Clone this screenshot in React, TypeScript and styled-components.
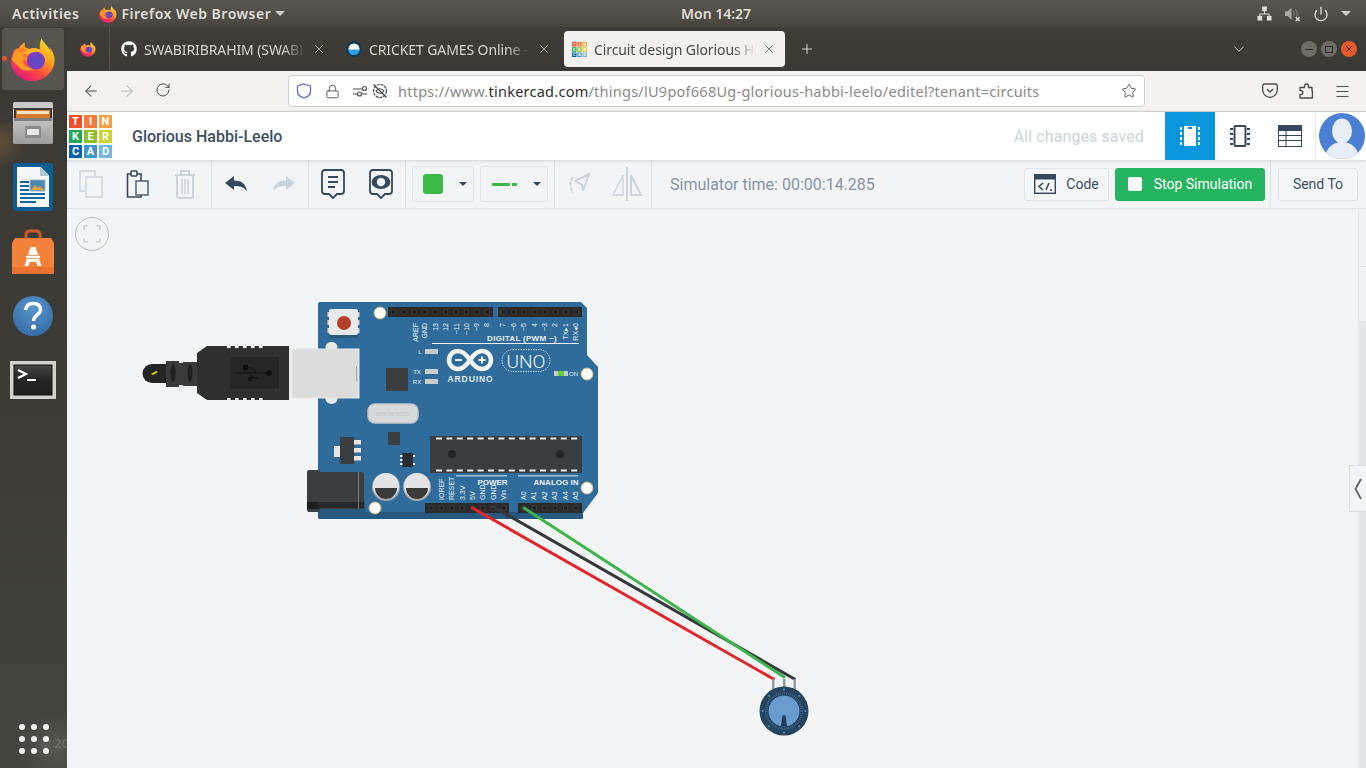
import React, { FunctionComponent } from 'react'
import styled, { createGlobalStyle } from 'styled-components'
import { X, Plus, ChevronDown, ArrowLeft, ArrowRight, RotateCw, Lock, Star, Menu, Power } from 'lucide-react'
import { FaGithub } from 'react-icons/fa'

const GlobalStyle = createGlobalStyle`
  html, body {
    margin: 0;
    height: 100%;
    overflow: hidden;
    background: #3c3b36;
  }
  * {
    box-sizing: border-box;
  }
`

const Screen = styled.div`
  width: 1366px;
  height: 768px;
  display: flex;
  flex-direction: column;
  overflow: hidden;
  font-family: 'Noto Sans', sans-serif;
`

/* ---------- gnome top bar ---------- */

const TopBar = styled.header`
  height: 27px;
  flex: none;
  display: grid;
  grid-template-columns: 681px auto 1fr;
  align-items: center;
  background: linear-gradient(#5a574f, #47453e);
  color: #dfded7;
  font-size: 14px;
  font-weight: 600;
`

const TopLeft = styled.div`
  display: flex;
  align-items: center;
  padding-left: 12px;
  letter-spacing: 0.5px;
`

const AppMenu = styled.div`
  display: flex;
  align-items: center;
  margin-left: 20px;
  gap: 4px;
`

const Caret = styled.span<{ $color?: string; $size?: number }>`
  display: inline-block;
  width: 0;
  height: 0;
  border-left: ${({ $size = 4 }) => $size}px solid transparent;
  border-right: ${({ $size = 4 }) => $size}px solid transparent;
  border-top: ${({ $size = 4 }) => $size}px solid ${({ $color = '#cfcec8' }) => $color};
`

const StatusArea = styled.div`
  display: flex;
  align-items: center;
  justify-content: flex-end;
  gap: 12px;
  padding-right: 15px;
`

/* ---------- main split ---------- */

const Body = styled.div`
  flex: 1;
  display: flex;
  min-height: 0;
`

const Dock = styled.nav`
  width: 67px;
  flex: none;
  position: relative;
  display: flex;
  flex-direction: column;
  overflow: hidden;
  background:
    radial-gradient(circle at 0 116px, rgba(150, 105, 60, 0.45), transparent 26px),
    radial-gradient(circle at 55px 720px, rgba(120, 125, 115, 0.35), transparent 34px),
    linear-gradient(#3a3934, #3c3b36 50%, #45453f);
`

const DockItem = styled.div<{ $active?: boolean }>`
  height: 64.2px;
  flex: none;
  margin: 0 3px 0 2px;
  position: relative;
  display: flex;
  align-items: center;
  justify-content: center;
  border-radius: 4px;
  border-top: 1px solid transparent;
  border-bottom: 1px solid transparent;
  background-clip: padding-box;
  background-color: ${({ $active }) => ($active ? '#565550' : 'transparent')};
`

const RunningDot = styled.span`
  position: absolute;
  left: 0;
  top: 28px;
  width: 5px;
  height: 5px;
  border-radius: 50%;
  background: #e95420;
`

const AppGrid = styled.div`
  margin-top: auto;
  margin-bottom: 14px;
  align-self: center;
  display: grid;
  grid-template-columns: repeat(3, 6px);
  gap: 6px;
`

const AppDot = styled.span`
  width: 6px;
  height: 6px;
  border-radius: 50%;
  background: #f1f1ee;
`

const WallpaperMark = styled.span`
  position: absolute;
  left: 40px;
  bottom: 16px;
  color: rgba(255, 255, 255, 0.16);
  font-size: 13px;
  font-weight: 600;
  white-space: nowrap;
`

const Browser = styled.main`
  flex: 1;
  min-width: 0;
  display: flex;
  flex-direction: column;
`

/* ---------- firefox tab strip ---------- */

const TabStrip = styled.div`
  height: 44px;
  flex: none;
  display: flex;
  align-items: center;
  background: linear-gradient(#3f3d38, #3a3934);
`

const PinnedTab = styled.div`
  width: 43px;
  height: 44px;
  flex: none;
  display: flex;
  align-items: center;
  justify-content: center;
  border-right: 1px solid #57554f;
`

const Tab = styled.div<{ $active?: boolean }>`
  width: 221px;
  height: 36px;
  flex: none;
  margin-left: 4px;
  padding: 0 9px 0 ${({ $active }) => ($active ? 8 : 7)}px;
  display: flex;
  align-items: center;
  gap: 7px;
  border-radius: 4px;
  background: ${({ $active }) => ($active ? '#f3f1ef' : 'transparent')};
  color: ${({ $active }) => ($active ? '#4b4a47' : '#d5d4cf')};
`

const TabLabel = styled.span`
  flex: 1;
  min-width: 0;
  overflow: hidden;
  white-space: nowrap;
  font-size: 14px;
  letter-spacing: -0.1px;
  -webkit-mask-image: linear-gradient(to right, #000 calc(100% - 22px), transparent);
  mask-image: linear-gradient(to right, #000 calc(100% - 22px), transparent);
`

const NewTab = styled.div`
  margin-left: 14px;
  display: flex;
  color: #e2e1dc;
`

const StripRight = styled.div`
  margin-left: auto;
  display: flex;
  align-items: center;
  padding-right: 9px;
`

const StripChevron = styled.div`
  display: flex;
  margin-right: 53px;
  color: #dcdbd6;
`

const WindowButtons = styled.div`
  display: flex;
  gap: 4px;
`

const WindowButton = styled.span<{ $close?: boolean }>`
  width: 16px;
  height: 16px;
  display: flex;
  align-items: center;
  justify-content: center;
  border-radius: 50%;
  background: ${({ $close }) => ($close ? '#e2592a' : '#6d6c66')};
  color: ${({ $close }) => ($close ? '#3a2016' : '#2f2e2a')};
`

const Dash = styled.span`
  width: 8px;
  height: 1px;
  background: #2f2e2a;
`

const Square = styled.span`
  width: 8px;
  height: 7px;
  border: 1px solid #2f2e2a;
`

/* ---------- firefox nav bar ---------- */

const NavBar = styled.div`
  height: 40px;
  flex: none;
  display: flex;
  align-items: center;
  background: #f3f2f0;
  color: #4a4a48;
`

const NavButton = styled.span<{ $muted?: boolean }>`
  width: 36px;
  flex: none;
  display: flex;
  justify-content: center;
  color: ${({ $muted }) => ($muted ? '#b9b8b6' : '#4a4a48')};
`

const NavBack = styled.div`
  display: flex;
  margin-left: 6px;
`

const UrlBox = styled.div`
  width: 857px;
  height: 32px;
  margin-left: 107px;
  padding: 0 7px 0 7px;
  display: flex;
  align-items: center;
  background: #fff;
  border: 1px solid #cfcfcd;
  border-radius: 4px;
`

const UrlIcon = styled.span<{ $width: number }>`
  width: ${({ $width }) => $width}px;
  flex: none;
  display: flex;
  justify-content: center;
`

const UrlText = styled.span`
  flex: 1;
  margin-left: 6px;
  white-space: nowrap;
  overflow: hidden;
  font-size: 14.5px;
  letter-spacing: 0.25px;
  color: #8a8a88;
`

const UrlHost = styled.span`
  color: #2e2e2c;
`

const NavRight = styled.div`
  margin-left: auto;
  display: flex;
  padding-right: 6px;
`

/* ---------- tinkercad header ---------- */

const Header = styled.div`
  height: 49px;
  flex: none;
  position: relative;
  z-index: 1;
  display: flex;
  align-items: center;
  background: #fff;
  border-top: 1px solid #cfcfcd;
  box-shadow: 0 1px 3px rgba(40, 50, 60, 0.16);
  font-family: Roboto, sans-serif;
`

const Logo = styled.div`
  margin-left: 2px;
  display: grid;
  grid-template-columns: repeat(3, 13px);
  grid-auto-rows: 13px;
  gap: 2px;
`

const LogoCell = styled.span<{ $bg: string }>`
  display: flex;
  align-items: center;
  justify-content: center;
  background: ${({ $bg }) => $bg};
  color: #fff;
  font-size: 11px;
  font-weight: 700;
`

const Title = styled.h1`
  margin: 0 0 0 20px;
  font-size: 16px;
  font-weight: 500;
  color: #3d4f63;
`

const Saved = styled.span`
  margin-left: auto;
  margin-right: 21px;
  font-size: 16px;
  letter-spacing: 0.1px;
  color: #ccd3db;
`

const ViewTab = styled.div<{ $active?: boolean }>`
  width: 50px;
  height: 48px;
  flex: none;
  display: flex;
  align-items: center;
  justify-content: center;
  background: ${({ $active }) => ($active ? '#0a96dc' : 'transparent')};
`

const AvatarSlot = styled.div`
  width: 51px;
  height: 48px;
  flex: none;
  display: flex;
  align-items: center;
  justify-content: center;
  padding-left: 1px;
  border-left: 1px solid #e5e7ea;
`

/* ---------- tinkercad toolbar ---------- */

const Toolbar = styled.div`
  height: 49px;
  flex: none;
  display: flex;
  align-items: stretch;
  background: #f3f4f6;
  border-bottom: 1px solid #dfe2e6;
  font-family: Roboto, sans-serif;
`

const ToolGroup = styled.div<{ $width: number; $padLeft?: number; $padRight?: number; $gap?: number }>`
  width: ${({ $width }) => $width}px;
  flex: none;
  padding: 0 ${({ $padRight = 0 }) => $padRight}px 0 ${({ $padLeft = 0 }) => $padLeft}px;
  display: flex;
  align-items: center;
  gap: ${({ $gap = 0 }) => $gap}px;
  border-right: 1px solid #dfe2e6;
`

const ToolSlot = styled.span`
  flex: 1 0 0;
  display: flex;
  justify-content: center;
`

const PickerBox = styled.div<{ $width: number }>`
  width: ${({ $width }) => $width}px;
  height: 36px;
  flex: none;
  padding: 0 6px 0 10px;
  display: flex;
  align-items: center;
  justify-content: space-between;
  border: 1px solid #e2e5e9;
  border-radius: 3px;
`

const Swatch = styled.span`
  width: 20px;
  height: 20px;
  border-radius: 3px;
  background: #3dba45;
`

const LinePreview = styled.span`
  display: flex;
  gap: 2px;
  align-items: center;
  margin-left: 1px;
`

const LineLong = styled.span`
  width: 18px;
  height: 3px;
  background: #3dba45;
`

const LineShort = styled.span`
  width: 5px;
  height: 3px;
  background: #3dba45;
`

const SimTime = styled.span`
  margin-left: 18px;
  align-self: center;
  font-size: 16px;
  color: #8793a2;
`

const ToolActions = styled.div`
  margin-left: auto;
  display: flex;
  align-items: center;
  gap: 6px;
  padding-right: 5px;
  border-right: 1px solid #dfe2e6;
`

const ActionButton = styled.button<{ $primary?: boolean; $width: number }>`
  width: ${({ $width }) => $width}px;
  height: 33px;
  padding: 0;
  display: flex;
  align-items: center;
  justify-content: center;
  gap: ${({ $primary }) => ($primary ? 12 : 10)}px;
  font-family: Roboto, sans-serif;
  font-size: 14px;
  border-radius: 3px;
  border: 1px solid ${({ $primary }) => ($primary ? '#25b45f' : '#e0e3e7')};
  background: ${({ $primary }) => ($primary ? '#25b45f' : '#f5f6f7')};
  color: ${({ $primary }) => ($primary ? '#fff' : '#3d4f63')};
`

const SendWrap = styled.div`
  padding: 0 8px 0 7px;
  display: flex;
  align-items: center;
`

const StopSquare = styled.span`
  width: 14px;
  height: 14px;
  border-radius: 2px;
  background: #fff;
`

/* ---------- canvas ---------- */

const Workspace = styled.div`
  flex: 1;
  min-height: 0;
  display: flex;
  position: relative;
  background: #f3f4f6;
`

const CanvasArea = styled.div`
  flex: 1;
  position: relative;
`

const CircuitSvg = styled.svg`
  position: absolute;
  inset: 0;
  display: block;
`

const FitButton = styled.div`
  position: absolute;
  left: 8px;
  top: 8px;
  width: 34px;
  height: 34px;
  display: flex;
  align-items: center;
  justify-content: center;
  border: 1px solid #bdbdbd;
  border-radius: 50%;
`

const SideStrip = styled.div`
  width: 8px;
  flex: none;
  display: flex;
  flex-direction: column;
  background: #e4e6ea;
`

const SideCap = styled.div<{ $height: number }>`
  height: ${({ $height }) => $height}px;
  background: #f1f2f4;
  border-left: 1px solid #e6e8eb;
  border-bottom: 1px solid #e0e2e6;
`

const CollapseHandle = styled.div`
  position: absolute;
  right: 0;
  top: 256px;
  width: 17px;
  height: 47px;
  display: flex;
  align-items: center;
  justify-content: center;
  background: #f3f4f6;
  border: 1px solid #dcdee1;
  border-right: 0;
`

const BoardText = styled.text<{ $size?: number; $weight?: number }>`
  font-family: 'Liberation Sans', sans-serif;
  font-size: ${({ $size = 7 }) => $size}px;
  font-weight: ${({ $weight = 400 }) => $weight};
  fill: #e9eff4;
`

const UnoText = styled.text`
  font-family: Roboto, sans-serif;
  font-size: 19px;
  font-weight: 300;
  fill: #eef3f7;
`

const CrystalText = styled.text`
  font-family: 'Liberation Sans', sans-serif;
  font-size: 6px;
  fill: #c6c7c8;
`

const FaviconLetter = styled.text`
  font-family: 'Liberation Sans', sans-serif;
  font-size: 3.6px;
  font-weight: 700;
  fill: #fff;
`

/* ---------- drawings ---------- */

const FirefoxLogo: FunctionComponent<{ size: number; id: string }> = ({ size, id }) => (
  <svg width={size} height={size} viewBox="0 0 48 48">
    <defs>
      <linearGradient id={`${id}a`} x1="0.8" y1="0.02" x2="0.2" y2="0.95">
        <stop offset="0" stopColor="#ffe226" />
        <stop offset="0.35" stopColor="#ffa020" />
        <stop offset="0.68" stopColor="#ff4a3e" />
        <stop offset="1" stopColor="#e31587" />
      </linearGradient>
      <radialGradient id={`${id}b`} cx="0.55" cy="0.55" r="0.55">
        <stop offset="0" stopColor="#5a4fc6" />
        <stop offset="0.75" stopColor="#7240c4" />
        <stop offset="1" stopColor="#9a3cb8" />
      </radialGradient>
    </defs>
    <path
      fill={`url(#${id}a)`}
      d="M46 21c-.8-3.600-3-7.400-5-9.600 1 2.200 1.600 4.200 1.800 5.700-2.400-6-6.400-8.400-9.700-13.600-.2-.3-.3-.6-.5-1-1 4.800-2.400 8-1 11.600C27 12 23 12 20 13.500c-1.700-1-2.200-1.200-4-1.500-.6-1.600-.9-3.300-.4-5.300-3.300 1.500-5.400 3.800-6.800 6.500-1.600-.2-3 .2-4 1.300C2.800 18 1 21.700 1 25.500 1 37.500 11 47 23.300 47 36 47 46.500 37 46.500 25c0-1.400-.1-2.700-.5-4z"
    />
    <path
      fill="#ff9b25"
      d="M2.500 23c1-5 3.500-8 6.500-10 0 2 1 3.500 3 5 2-2.300 5.500-2.700 8-1.500-4.500.5-6.500 3-6.500 5.500 3 0 4 1 4.500 2.500-2 1-3.500.5-4.500 1 .5 5 6 9 13 8.500-8 4.500-15.500 1.500-19-3.500-3-2.300-5.500-4.500-5.500-7.500z"
    />
    <circle cx="27" cy="25.500" r="9.500" fill={`url(#${id}b)`} />
    <path fill="#ffb52e" d="M15 18c3-4.500 9.500-6 14.500-4 3.500 1.500 5.800 4.500 6.500 8-2-3.500-5-5.500-8.500-5.500-4 0-6.500 1-7.500 2.500-2 .2-3.500 0-5-1z" />
  </svg>
)

const CabinetIcon = () => (
  <svg width="44" height="46" viewBox="0 0 44 46">
    <defs>
      <linearGradient id="cabBody" x1="0" y1="0" x2="0" y2="1">
        <stop offset="0" stopColor="#d4d4d4" />
        <stop offset="1" stopColor="#9c9c9c" />
      </linearGradient>
    </defs>
    <path fill="#c9c9c9" d="M2 4q0-2 2-2h36q2 0 2 2v4H2z" />
    <rect x="2" y="8" width="40" height="36" rx="1.500" fill="url(#cabBody)" />
    <rect x="3" y="8" width="38" height="13" fill="#3c3a36" />
    <rect x="5" y="10" width="34" height="8" fill="#d9782f" />
    <rect x="6" y="11" width="32" height="3" fill="#f4e2c4" />
    <rect x="3" y="18" width="38" height="3" fill="#7e7e7e" />
    <rect x="14" y="26" width="16" height="12" rx="1" fill="#8a8a8a" />
    <rect x="16" y="29" width="12" height="6" rx="1" fill="#e8e8e8" />
  </svg>
)

const WriterIcon = () => (
  <svg width="42" height="48" viewBox="0 0 42 48">
    <path fill="#0b5d92" d="M3 0h34q4 0 4 4v40q0 4-4 4H5q-4 0-4-4V2q0-2 2-2z" />
    <path fill="#f4f6f8" d="M5 4h24l8 8v32H5z" />
    <path fill="#0b5d92" d="M29 0h8q4 0 4 4v8h-4l-8-8z" />
    <path fill="#b5c4cf" d="M28 4l9 9h-9z" />
    <rect x="8" y="18" width="9" height="2" fill="#14659c" />
    <rect x="8" y="22" width="9" height="2" fill="#14659c" />
    <rect x="8" y="26" width="9" height="2" fill="#14659c" />
    <rect x="8" y="30" width="25" height="2" fill="#14659c" />
    <rect x="8" y="34" width="25" height="2" fill="#14659c" />
    <rect x="8" y="38" width="16" height="2" fill="#14659c" />
    <rect x="18" y="17" width="15" height="11" fill="#4d87b0" stroke="#9eb6c6" />
    <path fill="#e0a33a" d="M19 27l4-5 3 3 2-2 4 4z" />
  </svg>
)

const BagIcon = () => (
  <svg width="44" height="46" viewBox="0 0 44 46">
    <path fill="none" stroke="#c95a28" strokeWidth="3" d="M15 14V6q0-4 4-4h6q4 0 4 4v8" />
    <path fill="#f08339" d="M4 9h36l3 5v31H1V14z" />
    <path fill="#e7682c" d="M1 38h42v7H1z" opacity="0.6" />
    <path fill="#fff" d="M19.500 18h5l6 19h-4l-1.200-4h-6.600L17.500 37h-4z" />
    <rect x="12" y="26" width="20" height="4" fill="#f08339" />
    <rect x="15" y="26.800" width="14" height="2.400" fill="#fff" />
  </svg>
)

const HelpIcon = () => (
  <svg width="42" height="42" viewBox="0 0 42 42">
    <defs>
      <radialGradient id="helpBlue" cx="0.5" cy="0.3" r="0.8">
        <stop offset="0" stopColor="#5b97cf" />
        <stop offset="1" stopColor="#2d679f" />
      </radialGradient>
    </defs>
    <circle cx="21" cy="21" r="20" fill="url(#helpBlue)" />
    <path fill="none" stroke="#fff" strokeWidth="3.400" d="M13.500 15q1-6.500 7.500-6.500 7.500 0 7.500 6.200c0 5-7 5.300-7 11.300" />
    <circle cx="21.500" cy="32" r="2.500" fill="#fff" />
  </svg>
)

const TerminalIcon = () => (
  <svg width="46" height="38" viewBox="0 0 46 38">
    <defs>
      <linearGradient id="termScreen" x1="0" y1="0" x2="0" y2="1">
        <stop offset="0" stopColor="#454545" />
        <stop offset="0.5" stopColor="#262626" />
        <stop offset="1" stopColor="#1e1e1e" />
      </linearGradient>
    </defs>
    <rect width="46" height="38" fill="#d2d2d0" />
    <rect x="4" y="4" width="38" height="30" fill="url(#termScreen)" stroke="#111" />
    <path fill="none" stroke="#fff" strokeWidth="2.200" d="M8 9l8 4-8 4" />
    <rect x="17" y="18" width="9" height="2" fill="#fff" />
  </svg>
)

const NetworkIcon = () => (
  <svg width="15" height="15" viewBox="0 0 16 16" fill="#dfded7">
    <rect x="5.500" y="0.500" width="5" height="5" />
    <rect x="0.500" y="10.500" width="5" height="5" />
    <rect x="10.500" y="10.500" width="5" height="5" />
    <path d="M7.500 5h1v3h5v3h-1V9h-9v2h-1V8h5z" />
  </svg>
)

const MutedIcon = () => (
  <svg width="17" height="16" viewBox="0 0 18 16">
    <path fill="#a9a8a1" d="M1 5h3l4-4v13l-4-4H1z" />
    <path fill="none" stroke="#77766f" strokeWidth="1.300" d="M10 5q2 2.500 0 5M12 3q3.500 4 1 9" />
    <path stroke="#dfded7" strokeWidth="1.600" d="M12.500 11.500l4 4m0-4l-4 4" />
  </svg>
)

const PocketIcon = () => (
  <svg width="16" height="15" viewBox="0 0 16 15" fill="none" stroke="#4a4a48" strokeWidth="1.300">
    <path d="M2.500 1h11q1.800 0 1.800 1.800V7a7.300 7.300 0 0 1-14.600 0V2.800Q.7 1 2.500 1z" />
    <path d="M5 6l3 3 3-3" />
  </svg>
)

const ExtensionIcon = () => (
  <svg width="15" height="16" viewBox="0 0 15 16" fill="none" stroke="#4a4a48" strokeWidth="1.300">
    <path d="M1 15v-3.500h.8a2 2 0 0 0 0-4H1V4.500h4.500V3a2 2 0 0 1 4 0v1.500H13V8h.4v7z" strokeLinejoin="round" />
  </svg>
)

const ShieldIcon = () => (
  <svg width="16" height="16" viewBox="0 0 16 16" fill="none" stroke="#5b6bd8" strokeWidth="1.300">
    <path d="M8 1l6.500 2v5c0 3.500-3 6-6.500 7-3.500-1-6.500-3.500-6.500-7V3z" />
  </svg>
)

const PermissionsIcon = () => (
  <svg width="16" height="12" viewBox="0 0 16 12" fill="none" stroke="#4a4a48" strokeWidth="1.100">
    <path d="M1 4h9M1 9h4M10 9h5" />
    <circle cx="12.500" cy="3.500" r="2" />
    <circle cx="7.500" cy="9" r="2" />
  </svg>
)

const NoTrackIcon = () => (
  <svg width="16" height="16" viewBox="0 0 16 16" fill="none" stroke="#4a4a48" strokeWidth="1.200">
    <circle cx="8" cy="8" r="6.500" strokeDasharray="3 0.800" />
    <path d="M1.500 1.500l13 13" />
    <path d="M4 8c2-3 6-3 8 0-2 3-6 3-8 0z" />
  </svg>
)

const logoCells: [string, string][] = [
  ['T', '#ef4f2b'],
  ['I', '#f57a3c'],
  ['N', '#f4a247'],
  ['K', '#1fa854'],
  ['E', '#8cbf26'],
  ['R', '#cbd233'],
  ['C', '#0a62ad'],
  ['A', '#3f96cf'],
  ['D', '#6fb8e1'],
]

const TinkercadFavicon = () => (
  <svg width="15" height="15" viewBox="0 0 15 15">
    {logoCells.map(([letter, bg], i) => {
      const x = (i % 3) * 5.25
      const y = Math.floor(i / 3) * 5.25
      return (
        <g key={letter}>
          <rect x={x} y={y} width="4.500" height="4.500" fill={bg} />
          <FaviconLetter x={x + 2.25} y={y + 3.5} textAnchor="middle">
            {letter}
          </FaviconLetter>
        </g>
      )
    })}
  </svg>
)

const CricketFavicon = () => (
  <svg width="16" height="16" viewBox="0 0 16 16">
    <circle cx="8" cy="8" r="8" fill="#123a55" />
    <circle cx="8" cy="8" r="5.500" fill="#fff" />
    <path d="M2.500 8.500h11a5.500 5.500 0 0 1-11 0z" fill="#2f9fe0" />
  </svg>
)

const Ink = '#34495e'
const Faded = '#cbd3dc'

const CopyIcon = () => (
  <svg width="24" height="28" viewBox="0 0 24 28" fill="#f3f4f6" stroke={Faded} strokeWidth="1.500">
    <rect x="1" y="1" width="15" height="20" />
    <rect x="7" y="7" width="16" height="20" />
  </svg>
)

const PasteIcon = () => (
  <svg width="23" height="28" viewBox="0 0 23 28" fill="none" stroke={Ink} strokeWidth="1.600">
    <path d="M7 4H1.500v23H15v-4" />
    <path d="M10 4h5v7" />
    <rect x="5" y="1" width="6" height="5" rx="1" fill="#f3f4f6" />
    <rect x="10" y="11" width="12" height="14" fill="#f3f4f6" strokeOpacity="0.8" />
  </svg>
)

const TrashIcon = () => (
  <svg width="22" height="30" viewBox="0 0 22 30" fill="none" stroke={Faded} strokeWidth="2">
    <path d="M1 6h20M7 5V2h8v3" />
    <path d="M3 6v21q0 2 2 2h12q2 0 2-2V6" />
    <path d="M8 10v15M11 10v15M14 10v15" strokeWidth="1.500" />
  </svg>
)

const UndoIcon: FunctionComponent<{ color: string; flip?: boolean }> = ({ color, flip }) => (
  <svg width="22" height="16" viewBox="0 0 22 16" transform={flip ? 'scale(-1 1)' : undefined}>
    <path fill={color} d="M0 7L9 0v4.500c7 0 12 3 13 11-3-4.500-7-5.500-13-5.500v4z" />
  </svg>
)

const NoteIcon = () => (
  <svg width="24" height="30" viewBox="0 0 24 30" fill="none" stroke={Ink} strokeWidth="1.800">
    <path d="M4 1h16q3 0 3 3v18q0 3-3 3h-4l-4 4-4-4H4q-3 0-3-3V4q0-3 3-3z" />
    <path d="M7 8h10M7 13h10M7 18h7" strokeWidth="2" />
  </svg>
)

const EyeNoteIcon = () => (
  <svg width="24" height="30" viewBox="0 0 24 30" fill="none" stroke={Ink} strokeWidth="1.800">
    <path d="M4 1h16q3 0 3 3v18q0 3-3 3h-4l-4 4-4-4H4q-3 0-3-3V4q0-3 3-3z" />
    <ellipse cx="12" cy="13" rx="8.500" ry="6" fill={Ink} />
    <circle cx="12" cy="13" r="4.200" fill="#f3f4f6" stroke="none" />
  </svg>
)

const RotateIcon = () => (
  <svg width="22" height="24" viewBox="0 0 22 24" fill="none" stroke={Faded} strokeWidth="2">
    <path d="M21 2L7 9l7 4 1 6z" />
    <path d="M5 5Q0 12 5 21" strokeDasharray="4 1.500" />
  </svg>
)

const MirrorIcon = () => (
  <svg width="32" height="34" viewBox="0 0 32 34" fill="none" stroke={Faded} strokeWidth="2">
    <path d="M16 0v34" />
    <path d="M12 8L2 28h10z" strokeWidth="1.300" />
    <path d="M20 8l10 20H20z" />
  </svg>
)

const ActiveChipIcon = () => (
  <svg width="20" height="22" viewBox="0 0 20 22">
    <path fill="#fff" d="M4 1h12v20H4z" />
    <rect x="8" y="2" width="4" height="2" fill="#0a96dc" />
    <path d="M1 2v3M1 7v3M1 12v3M1 17v3M19 2v3M19 7v3M19 12v3M19 17v3" stroke="#fff" strokeWidth="2" />
  </svg>
)

const ChipIcon = () => (
  <svg width="20" height="22" viewBox="0 0 20 22" fill="none" stroke={Ink}>
    <rect x="4.500" y="1" width="11" height="20" rx="1" strokeWidth="2" />
    <path d="M0 4h3M0 9h3M0 14h3M0 19h3M17 4h3M17 9h3M17 14h3M17 19h3" strokeWidth="2" />
  </svg>
)

const TableIcon = () => (
  <svg width="24" height="22" viewBox="0 0 24 22" fill="none">
    <rect x="0.500" y="0.500" width="23" height="21" stroke={Ink} />
    <rect width="24" height="6" fill={Ink} />
    <path d="M0 10.500h24M0 15.500h24M8 6v16" stroke={Ink} />
  </svg>
)

const Avatar = () => (
  <svg width="46" height="46" viewBox="0 0 46 46">
    <defs>
      <clipPath id="avatarClip">
        <circle cx="23" cy="23" r="23" />
      </clipPath>
    </defs>
    <circle cx="23" cy="23" r="23" fill="#4a7fd3" />
    <g clipPath="url(#avatarClip)" fill="#e8eef8">
      <ellipse cx="23" cy="18" rx="10" ry="12.500" />
      <ellipse cx="23" cy="43" rx="16" ry="14" />
    </g>
  </svg>
)

const CodeIcon = () => (
  <svg width="22" height="20" viewBox="0 0 22 20" fill="none" stroke={Ink}>
    <rect x="0.700" y="0.700" width="20.600" height="18.600" strokeWidth="1.400" />
    <rect y="0" width="22" height="5" fill={Ink} />
    <path d="M9 9l-4 3.500L9 16M12 16l3-7M16 16h2" strokeWidth="1.600" />
  </svg>
)

const FitIcon = () => (
  <svg width="18" height="18" viewBox="0 0 18 18" fill="none" stroke="#ccd0d5" strokeWidth="1.500">
    <path d="M1 5V1h4M13 1h4v4M17 13v4h-4M5 17H1v-4" />
  </svg>
)

const HandleChevron = () => (
  <svg width="8" height="22" viewBox="0 0 8 22" fill="none" stroke="#5d6065" strokeWidth="1.800">
    <path d="M7 1L1.500 11 7 21" />
  </svg>
)

const pinRow = (startX: number, y: number, count: number, step = 10.45) =>
  Array.from({ length: count }, (_, i) => (
    <g key={i}>
      <rect x={startX + step * i - 2.6} y={y - 2.6} width="5.200" height="5.200" fill="#3a3a3a" />
      <rect x={startX + step * i - 1.5} y={y - 1.5} width="3" height="3" fill="#1c1c1c" />
    </g>
  ))

const upLabel = (x: number, y: number, label: string, anchor: 'start' | 'end') => (
  <BoardText
    key={label + x}
    x={x}
    y={y}
    textAnchor={anchor}
    transform={`rotate(-90 ${x} ${y})`}
    dominantBaseline="middle"
  >
    {label}
  </BoardText>
)

const topLabels: [number, string][] = [
  [416, 'AREF'],
  [425.6, 'GND'],
  [436, '13'],
  [446.5, '12'],
  [457, '~11'],
  [467.5, '~10'],
  [477.5, '~9'],
  [487.5, '8'],
  [503.5, '7'],
  [514, '~6'],
  [524.5, '~5'],
  [535, '4'],
  [545, '~3'],
  [555.5, '2'],
  [566, 'TX▸1'],
  [576.5, 'RX◂0'],
]

const powerLabels: [number, string][] = [
  [441.7, 'IOREF'],
  [452.3, 'RESET'],
  [462.7, '3.3V'],
  [473, '5V'],
  [483.3, 'GND'],
  [493.7, 'GND'],
  [504, 'Vin'],
]

const analogLabels: [number, string][] = [
  [524, 'A0'],
  [534.3, 'A1'],
  [544.7, 'A2'],
  [555.3, 'A3'],
  [565.7, 'A4'],
  [576, 'A5'],
]

const mountHole = (cx: number, cy: number) => (
  <circle cx={cx} cy={cy} r="6" fill="#fbfbf7" stroke="#cbb98a" strokeWidth="1" />
)

const UsbPlug = () => (
  <g>
    <path fill="#242424" d="M152 364h16v19h-16a9.500 9.500 0 0 1 0-19z" />
    <path fill="#e6d40f" d="M151 374l5-3 2 1-5 3z" />
    <path fill="#3a3a3a" d="M166 361h13v2h4v-1h14v24h-14v-1h-4v2h-13z" />
    <ellipse cx="173" cy="373" rx="2.500" ry="9" fill="#202020" />
    <ellipse cx="190" cy="373" rx="2.500" ry="9" fill="#202020" />
    <path fill="#303030" d="M197 353l10-7h82v54h-82l-10-7z" />
    {[227, 235, 243, 251, 259].map(x => (
      <g key={x} fill="#f3f4f6">
        <rect x={x} y="346" width="3.500" height="2" />
        <rect x={x} y="398" width="3.500" height="2" />
      </g>
    ))}
    <rect x="230" y="357" width="49" height="32" fill="#262626" />
    <g stroke="#0e0e0e" strokeWidth="1" fill="none">
      <path d="M236 373h36" />
      <path d="M243 373l5-5h3q3 0 5 5M250 373l3 5h6" />
    </g>
    <circle cx="269" cy="373" r="3" fill="#0e0e0e" />
    <rect x="243" y="365" width="5" height="5" fill="#0e0e0e" />
    <circle cx="250" cy="379" r="2" fill="#0e0e0e" />
    <rect x="289" y="350" width="3" height="47" fill="#ececec" />
    <rect x="292" y="349" width="67" height="49" fill="#dcdcdc" stroke="#e8e8e8" strokeWidth="1" />
    <rect x="356" y="366" width="0.800" height="15" fill="#9a9a9a" />
  </g>
)

const Board = () => (
  <g>
    <path fill="#2f6c9b" d="M318 304q0-2 2-2h261l6 6v47l11 12v126l-15 20v6H320q-2 0-2-2z" />
    <path fill="#27597f" d="M318 512h265v5q0 2-2 2H320q-2 0-2-2z" />
    {/* reset button */}
    <rect x="329" y="311" width="29" height="27" rx="2" fill="#2a5877" />
    <rect x="327.500" y="312" width="32" height="5" fill="#d6d6d6" />
    <rect x="327.500" y="320" width="32" height="5" fill="#d6d6d6" />
    <rect x="327.500" y="328" width="32" height="5" fill="#d6d6d6" />
    <rect x="329" y="309" width="29" height="26" rx="2" fill="#e9e9e9" />
    <circle cx="344" cy="323" r="7" fill="#b3412a" />
    {/* usb bumps */}
    <ellipse cx="331.500" cy="347" rx="6" ry="5" fill="#e9e9e9" />
    <ellipse cx="331.500" cy="399" rx="6" ry="5" fill="#e9e9e9" />
    {mountHole(380, 313)}
    {mountHole(587, 374)}
    {mountHole(587, 488)}
    {mountHole(375, 508)}
    {/* digital headers */}
    <rect x="388" y="307" width="105" height="10" fill="#2b2b2b" />
    <rect x="498" y="307" width="84" height="10" fill="#2b2b2b" />
    {pinRow(393.3, 312, 10)}
    {pinRow(503.3, 312, 8)}
    {topLabels.map(([x, label]) => upLabel(x, 323, label, 'end'))}
    <BoardText $size={8} $weight={700} x="522" y="341" textAnchor="middle" letterSpacing="0.3">
      DIGITAL (PWM ~)
    </BoardText>
    <rect x="432" y="343" width="147" height="1" fill="#e9eff4" />
    {/* leds */}
    <BoardText $size={6} x="420" y="354" textAnchor="middle">L</BoardText>
    <BoardText $size={6} x="417" y="374" textAnchor="middle">TX</BoardText>
    <BoardText $size={6} x="417" y="384" textAnchor="middle">RX</BoardText>
    <rect x="425" y="349" width="13" height="5" fill="#c9ccce" />
    <rect x="425" y="369" width="13" height="5" fill="#c9ccce" />
    <rect x="425" y="379" width="13" height="5" fill="#c9ccce" />
    <rect x="554" y="371" width="14" height="5" fill="#c9ccce" />
    <rect x="558" y="371" width="6" height="5" fill="#5fd03a" />
    <BoardText $size={6} x="569" y="376">ON</BoardText>
    {/* atmega16u2 */}
    <rect x="386" y="368" width="22" height="23" fill="#3b3e41" />
    {/* arduino logo */}
    <path
      fill="none"
      stroke="#f2f4f6"
      strokeWidth="4.500"
      d="M470 360c-4-6-8-9-12-9a9 9 0 0 0 0 18c4 0 8-3 12-9s8-9 12-9a9 9 0 0 1 0 18c-4 0-8-3-12-9z"
    />
    <rect x="455" y="359" width="7" height="2" fill="#f2f4f6" />
    <path fill="#f2f4f6" d="M478.500 359h2.500v-2.500h2V359h2.500v2H483v2.500h-2V361h-2.500z" />
    <BoardText $size={8.5} $weight={700} x="470.500" y="381.500" textAnchor="middle" letterSpacing="0.9">
      ARDUINO
    </BoardText>
    <rect x="502" y="349.500" width="48" height="22" rx="11" fill="none" stroke="#dfe7ee" strokeWidth="0.800" strokeDasharray="1.500 1" />
    <UnoText x="526" y="367.500" textAnchor="middle">
      UNO
    </UnoText>
    {/* crystal */}
    <rect x="368" y="404" width="50" height="19" rx="7" fill="#d8d9da" stroke="#c4c6c7" strokeWidth="1.500" />
    <CrystalText x="393" y="416" textAnchor="middle">
      SPK16.000G
    </CrystalText>
    {/* regulator, small parts */}
    <rect x="334" y="446" width="7" height="11" fill="#e5e5e5" />
    <rect x="354" y="440" width="7" height="4.500" fill="#e5e5e5" />
    <rect x="354" y="448" width="7" height="4.500" fill="#e5e5e5" />
    <rect x="354" y="456" width="7" height="4.500" fill="#e5e5e5" />
    <rect x="340" y="437" width="14" height="27" fill="#3b3e41" />
    <rect x="388" y="432" width="12" height="13" fill="#3b3e41" />
    <rect x="402" y="453" width="11" height="14" fill="#2b2d30" />
    <rect x="400" y="455" width="2.500" height="2" fill="#e5e5e5" />
    <rect x="400" y="459" width="2.500" height="2" fill="#e5e5e5" />
    <rect x="400" y="463" width="2.500" height="2" fill="#e5e5e5" />
    <rect x="413" y="455" width="2" height="2" fill="#e5e5e5" />
    <rect x="413" y="463" width="2" height="2" fill="#e5e5e5" />
    {/* barrel jack */}
    <rect x="319" y="500" width="46" height="13" fill="#27597f" />
    <rect x="307" y="470" width="13" height="42" rx="2" fill="#3b3e41" />
    <rect x="307" y="502" width="13" height="7" fill="#1f2022" />
    <rect x="318" y="472" width="46" height="37" rx="3" fill="#3b3e41" />
    <rect x="318" y="502" width="46" height="6" fill="#26282b" />
    <rect x="358" y="472" width="0.800" height="37" fill="#8b8d90" />
    {/* capacitors */}
    {[386, 417].map(cx => (
      <g key={cx}>
        <circle cx={cx} cy="487" r="14" fill="#a6a8aa" />
        <circle cx={cx} cy="486" r="13" fill="#e4e4e4" />
        <path fill="#3b3b3b" d={`M${cx - 11} 488h22a11 11 0 0 1-22 0z`} />
      </g>
    ))}
    {/* atmega328 */}
    <rect x="430" y="436" width="152" height="37" rx="1" fill="#3a3d40" />
    {Array.from({ length: 14 }, (_, i) => (
      <g key={i} fill="#e8e8e8">
        <rect x={436 + i * 10.4} y="437.500" width="6" height="2" />
        <rect x={436 + i * 10.4} y="469.500" width="6" height="2" />
      </g>
    ))}
    <circle cx="452" cy="454" r="4" fill="#232527" />
    <circle cx="560" cy="454" r="4" fill="#232527" />
    {/* bottom headers */}
    <rect x="456" y="475" width="51" height="1.500" fill="#a9c3d8" />
    <rect x="518" y="475" width="60" height="1.500" fill="#a9c3d8" />
    <BoardText $size={8} $weight={700} x="492.500" y="484.500" textAnchor="middle">POWER</BoardText>
    <BoardText $size={8} $weight={700} x="556" y="484.500" textAnchor="middle">ANALOG IN</BoardText>
    {powerLabels.map(([x, label]) => upLabel(x, 500, label, 'start'))}
    {analogLabels.map(([x, label]) => upLabel(x, 500, label, 'start'))}
    <rect x="425" y="503" width="84" height="10" fill="#2b2b2b" />
    <rect x="518" y="503" width="64" height="10" fill="#2b2b2b" />
    {pinRow(431, 508, 8, 10.38)}
    {pinRow(524, 508, 6, 10.4)}
  </g>
)

const Potentiometer = () => (
  <g>
    <rect x="772" y="679" width="2.500" height="10" fill="#9a9a9a" />
    <rect x="783" y="679" width="2.500" height="10" fill="#9a9a9a" />
    <rect x="793.500" y="679" width="2.500" height="10" fill="#9a9a9a" />
    <circle cx="784" cy="711" r="24.500" fill="#25455f" />
    {Array.from({ length: 8 }, (_, i) => {
      const a = (i * Math.PI) / 4
      return <circle key={i} cx={784 + 21.5 * Math.cos(a)} cy={711 + 21.5 * Math.sin(a)} r="1" fill="#5f8cb0" />
    })}
    <circle cx="784" cy="711" r="17.500" fill="#1c3850" stroke="#3e6a90" strokeWidth="2.500" strokeDasharray="1 1" />
    <circle cx="784" cy="711" r="15.500" fill="#6a9bd0" />
    <path fill="#1f3b54" d="M782.500 715.500h3l1.500 11h-6z" />
  </g>
)

const Circuit = () => (
  <CircuitSvg width="1291" height="559" viewBox="67 209 1291 559">
    <Board />
    <UsbPlug />
    <g fill="none" strokeWidth="3" strokeLinecap="round">
      <path stroke="#e0262a" d="M472.500 508L773.500 679" />
      <path stroke="#35373a" d="M493.500 507L794.500 679" />
      <path stroke="#3db54a" d="M524 508L784 677" />
    </g>
    <Potentiometer />
  </CircuitSvg>
)

const TabClose: FunctionComponent = () => <X size={14} strokeWidth={1.2} />

const App: FunctionComponent = () => (
  <Screen>
    <GlobalStyle />
    <TopBar>
      <TopLeft>
        Activities
        <AppMenu>
          <FirefoxLogo size={18} id="ffTop" />
          Firefox Web Browser
          <Caret $size={5} />
        </AppMenu>
      </TopLeft>
      <span>Mon 14:27</span>
      <StatusArea>
        <NetworkIcon />
        <MutedIcon />
        <Power size={16} strokeWidth={2} />
        <Caret $size={5} />
      </StatusArea>
    </TopBar>
    <Body>
      <Dock>
        <DockItem $active>
          <RunningDot />
          <FirefoxLogo size={46} id="ffDock" />
        </DockItem>
        <DockItem>
          <CabinetIcon />
        </DockItem>
        <DockItem>
          <WriterIcon />
        </DockItem>
        <DockItem>
          <BagIcon />
        </DockItem>
        <DockItem>
          <HelpIcon />
        </DockItem>
        <DockItem>
          <TerminalIcon />
        </DockItem>
        <WallpaperMark>© 20</WallpaperMark>
        <AppGrid>
          {Array.from({ length: 9 }, (_, i) => (
            <AppDot key={i} />
          ))}
        </AppGrid>
      </Dock>
      <Browser>
        <TabStrip>
          <PinnedTab>
            <FirefoxLogo size={16} id="ffTab" />
          </PinnedTab>
          <Tab>
            <FaGithub size={16} color="#f4f4f2" />
            <TabLabel>SWABIRIBRAHIM (SWABIRIBRAHIM)</TabLabel>
            <TabClose />
          </Tab>
          <Tab>
            <CricketFavicon />
            <TabLabel>CRICKET GAMES Online - Play Free</TabLabel>
            <TabClose />
          </Tab>
          <Tab $active>
            <TinkercadFavicon />
            <TabLabel>Circuit design Glorious Habbi-Leelo</TabLabel>
            <TabClose />
          </Tab>
          <NewTab>
            <Plus size={16} strokeWidth={1.4} />
          </NewTab>
          <StripRight>
            <StripChevron>
              <ChevronDown size={18} strokeWidth={1.2} />
            </StripChevron>
            <WindowButtons>
              <WindowButton>
                <Dash />
              </WindowButton>
              <WindowButton>
                <Square />
              </WindowButton>
              <WindowButton $close>
                <X size={10} strokeWidth={2} />
              </WindowButton>
            </WindowButtons>
          </StripRight>
        </TabStrip>
        <NavBar>
          <NavBack>
            <NavButton>
              <ArrowLeft size={18} strokeWidth={1.4} />
            </NavButton>
            <NavButton $muted>
              <ArrowRight size={18} strokeWidth={1.4} />
            </NavButton>
            <NavButton>
              <RotateCw size={16} strokeWidth={1.5} />
            </NavButton>
          </NavBack>
          <UrlBox>
            <UrlIcon $width={16}>
              <ShieldIcon />
            </UrlIcon>
            <UrlIcon $width={40}>
              <Lock size={15} strokeWidth={1.4} />
            </UrlIcon>
            <UrlIcon $width={16}>
              <PermissionsIcon />
            </UrlIcon>
            <UrlIcon $width={24}>
              <NoTrackIcon />
            </UrlIcon>
            <UrlText>
              https://www.<UrlHost>tinkercad.com</UrlHost>/things/lU9pof668Ug-glorious-habbi-leelo/editel?tenant=circuits
            </UrlText>
            <Star size={16} strokeWidth={1.3} />
          </UrlBox>
          <NavRight>
            <NavButton>
              <PocketIcon />
            </NavButton>
            <NavButton>
              <ExtensionIcon />
            </NavButton>
            <NavButton>
              <Menu size={17} strokeWidth={1.4} />
            </NavButton>
          </NavRight>
        </NavBar>
        <Header>
          <Logo>
            {logoCells.map(([letter, bg]) => (
              <LogoCell key={letter} $bg={bg}>
                {letter}
              </LogoCell>
            ))}
          </Logo>
          <Title>Glorious Habbi-Leelo</Title>
          <Saved>All changes saved</Saved>
          <ViewTab $active>
            <ActiveChipIcon />
          </ViewTab>
          <ViewTab>
            <ChipIcon />
          </ViewTab>
          <ViewTab>
            <TableIcon />
          </ViewTab>
          <AvatarSlot>
            <Avatar />
          </AvatarSlot>
        </Header>
        <Toolbar>
          <ToolGroup $width={145} $padRight={2}>
            <ToolSlot>
              <CopyIcon />
            </ToolSlot>
            <ToolSlot>
              <PasteIcon />
            </ToolSlot>
            <ToolSlot>
              <TrashIcon />
            </ToolSlot>
          </ToolGroup>
          <ToolGroup $width={97}>
            <ToolSlot>
              <UndoIcon color={Ink} />
            </ToolSlot>
            <ToolSlot>
              <UndoIcon color={Faded} flip />
            </ToolSlot>
          </ToolGroup>
          <ToolGroup $width={97}>
            <ToolSlot>
              <NoteIcon />
            </ToolSlot>
            <ToolSlot>
              <EyeNoteIcon />
            </ToolSlot>
          </ToolGroup>
          <ToolGroup $width={149} $padLeft={6} $padRight={6} $gap={6}>
            <PickerBox $width={62}>
              <Swatch />
              <Caret $color={Ink} />
            </PickerBox>
            <PickerBox $width={68}>
              <LinePreview>
                <LineLong />
                <LineShort />
              </LinePreview>
              <Caret $color={Ink} />
            </PickerBox>
          </ToolGroup>
          <ToolGroup $width={97}>
            <ToolSlot>
              <RotateIcon />
            </ToolSlot>
            <ToolSlot>
              <MirrorIcon />
            </ToolSlot>
          </ToolGroup>
          <SimTime>Simulator time: 00:00:14.285</SimTime>
          <ToolActions>
            <ActionButton $width={85}>
              <CodeIcon />
              Code
            </ActionButton>
            <ActionButton $primary $width={150}>
              <StopSquare />
              Stop Simulation
            </ActionButton>
          </ToolActions>
          <SendWrap>
            <ActionButton $width={80}>Send To</ActionButton>
          </SendWrap>
        </Toolbar>
        <Workspace>
          <CanvasArea>
            <Circuit />
            <FitButton>
              <FitIcon />
            </FitButton>
          </CanvasArea>
          <SideStrip>
            <SideCap $height={58} />
            <SideCap $height={55} />
          </SideStrip>
          <CollapseHandle>
            <HandleChevron />
          </CollapseHandle>
        </Workspace>
      </Browser>
    </Body>
  </Screen>
)

export default App
